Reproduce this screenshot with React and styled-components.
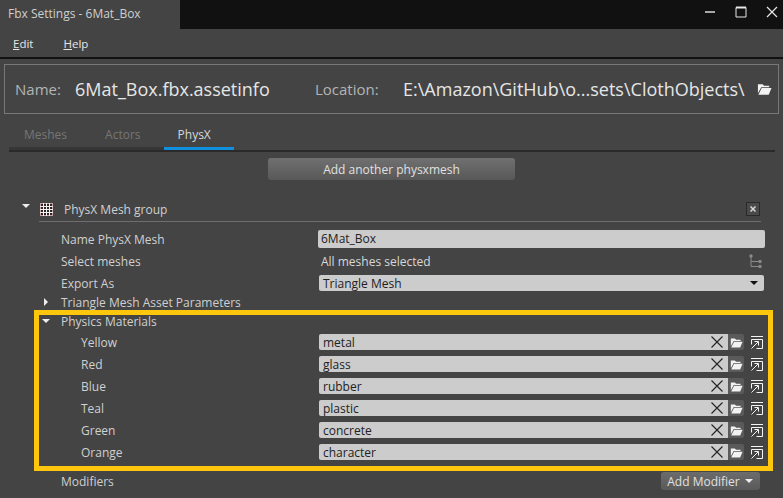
import styled, { createGlobalStyle } from "styled-components";

const materials = [
  ["Yellow", "metal"],
  ["Red", "glass"],
  ["Blue", "rubber"],
  ["Teal", "plastic"],
  ["Green", "concrete"],
  ["Orange", "character"],
];

const FolderIcon = ({ size = 12, color = "#f2f2f2" }) => (
  <svg width={size} height={size} viewBox="0 0 16 16">
    <path d="M1 3h5l1.500 1.500H13V6H4.500L1 12.500z" fill={color} />
    <path d="M5 7h10.500L12.500 14H1.500z" fill={color} />
  </svg>
);

const App = () => {
  return (
    <>
      <GlobalStyle />
      <Window>
        <TitleBar>
          <TitleTab>Fbx Settings - 6Mat_Box</TitleTab>
          <WindowButtons>
            <svg width="12" height="12" viewBox="0 0 12 12">
              <path d="M1 6h10" stroke="#e8e8e8" strokeWidth="1.400" />
            </svg>
            <svg width="12" height="12" viewBox="0 0 12 12">
              <path d="M1 1.500h10v9.500H1z" fill="none" stroke="#e8e8e8" strokeWidth="1" />
              <path d="M1 1.500h10" stroke="#e8e8e8" strokeWidth="2" />
            </svg>
            <svg width="12" height="12" viewBox="0 0 12 12">
              <path d="M1 1l10 10M11 1L1 11" stroke="#e8e8e8" strokeWidth="1.200" />
            </svg>
          </WindowButtons>
        </TitleBar>

        <MenuBar>
          <MenuItem>
            <u>E</u>dit
          </MenuItem>
          <MenuItem>
            <u>H</u>elp
          </MenuItem>
        </MenuBar>

        <NameBox>
          <NameLabel>Name:</NameLabel>
          <NameValue>6Mat_Box.fbx.assetinfo</NameValue>
          <LocationLabel>Location:</LocationLabel>
          <LocationValue>E:\Amazon\GitHub\o...sets\ClothObjects\</LocationValue>
          <FolderIcon size={16} />
        </NameBox>

        <TabBar>
          <Tab $left={15} $right={19}>Meshes</Tab>
          <Tab $left={19} $right={23}>Actors</Tab>
          <Tab $active $left={14} $right={23}>PhysX</Tab>
        </TabBar>

        <ButtonRow>
          <AddButton>Add another physxmesh</AddButton>
        </ButtonRow>

        <GroupHeader>
          <TriangleDown />
          <GroupBody>
            <GroupIcon>
              <svg width="13" height="13" viewBox="0 0 13 13">
                <rect x="0.500" y="0.500" width="12" height="12" fill="#2a2626" stroke="#c4a4a4" strokeWidth="1" />
                <path
                  d="M0 3.500h13M0 6.500h13M0 9.500h13M3.500 0v13M6.500 0v13M9.500 0v13"
                  stroke="#f6f0f0"
                  strokeWidth="1"
                />
              </svg>
            </GroupIcon>
            <GroupTitle>PhysX Mesh group</GroupTitle>
            <CloseBox>
              <svg width="6" height="6" viewBox="0 0 6 6">
                <path d="M0.500 0.500l5 5M5.500 0.500l-5 5" stroke="#d8d8d8" strokeWidth="1.500" />
              </svg>
            </CloseBox>
          </GroupBody>
        </GroupHeader>

        <Rows>
          <Row $height={22}>
            <RowLabel>Name PhysX Mesh</RowLabel>
            <TextInput>6Mat_Box</TextInput>
          </Row>
          <Row $height={22}>
            <RowLabel>Select meshes</RowLabel>
            <PlainValue>All meshes selected</PlainValue>
            <TreeIcon>
              <svg width="13" height="15" viewBox="0 0 13 15">
                <path d="M2 1.500V12.500H11M2 7.500H11" fill="none" stroke="#8a8a8a" strokeWidth="1" />
                <circle cx="2" cy="2" r="1.700" fill="#8a8a8a" />
                <circle cx="11" cy="7.500" r="1.700" fill="#8a8a8a" />
                <circle cx="11" cy="12.500" r="1.700" fill="#8a8a8a" />
              </svg>
            </TreeIcon>
          </Row>
          <Row $height={22}>
            <RowLabel>Export As</RowLabel>
            <SelectBox>
              Triangle Mesh
              <SelectArrow />
            </SelectBox>
          </Row>
          <Row $height={16}>
            <TriangleRight />
            <RowLabel>Triangle Mesh Asset Parameters</RowLabel>
          </Row>
        </Rows>

        <Highlight>
          <SubHeader>
            <TriangleDown />
            <span>Physics Materials</span>
          </SubHeader>
          {materials.map(([label, value]) => (
            <MaterialRow key={label}>
              <MaterialLabel>{label}</MaterialLabel>
              <MaterialInput>
                <span>{value}</span>
                <svg width="12" height="12" viewBox="0 0 12 12">
                  <path d="M0.500 0.500l11 11M11.500 0.500l-11 11" stroke="#222" strokeWidth="1.100" />
                </svg>
              </MaterialInput>
              <FolderButton>
                <FolderIcon size={13} />
              </FolderButton>
              <NavIcon>
                <svg width="12" height="13" viewBox="0 0 12 13">
                  <path d="M0 0.500h12" stroke="#f4f4f4" strokeWidth="1" />
                  <path d="M0.500 3.500h11v9H5.500M0.500 3.500v5" fill="none" stroke="#f4f4f4" strokeWidth="1" />
                  <path d="M0.500 12.500l6.500-6.500M3.500 5.500h4v4" fill="none" stroke="#f4f4f4" strokeWidth="1" />
                </svg>
              </NavIcon>
            </MaterialRow>
          ))}
        </Highlight>

        <ModifierRow>
          <RowLabel>Modifiers</RowLabel>
          <ModifierButton>
            Add Modifier
            <ButtonArrow />
          </ModifierButton>
        </ModifierRow>
      </Window>
    </>
  );
};

const GlobalStyle = createGlobalStyle`
  html, body {
    margin: 0;
    padding: 0;
    background: #444444;
    overflow: hidden;
  }
`;

const Window = styled.div`
  width: 783px;
  height: 498px;
  overflow: hidden;
  background-color: #444444;
  color: #d8d8d8;
  font-family: "Open Sans", sans-serif;
  font-size: 12px;
`;

const TitleBar = styled.div`
  height: 29px;
  display: flex;
  justify-content: space-between;
  background-color: #111111;
`;

const TitleTab = styled.div`
  width: 172px;
  padding-left: 8px;
  line-height: 28px;
  background-color: #444444;
  color: #cfcfcf;
  font-size: 12px;
`;

const WindowButtons = styled.div`
  display: flex;
  align-items: center;
  gap: 19px;
  padding: 0 5px 5px 0;
`;

const MenuBar = styled.div`
  height: 28px;
  display: flex;
  align-items: center;
  gap: 30px;
  padding-left: 13px;
  border-bottom: 2px solid #111111;
`;

const MenuItem = styled.span`
  color: #e6e6e6;
  font-size: 11.500px;
`;

const NameBox = styled.div`
  height: 48px;
  margin: 5px 4px 0;
  padding: 0 6px 0 10px;
  display: flex;
  align-items: center;
  border: 1px solid #787878;
  white-space: nowrap;
`;

const NameLabel = styled.span`
  flex: none;
  width: 60px;
  color: #b4b4b4;
  font-size: 15px;
`;

const NameValue = styled.span`
  flex: none;
  width: 240px;
  color: #e6e6e6;
  font-size: 18px;
`;

const LocationLabel = styled.span`
  flex: none;
  width: 88px;
  color: #b4b4b4;
  font-size: 15px;
`;

const LocationValue = styled.span`
  flex: none;
  width: 354px;
  color: #e6e6e6;
  font-size: 18px;
`;

const TabBar = styled.div`
  height: 36px;
  margin: 0 8px 0 9px;
  display: flex;
  align-items: flex-end;
  border-bottom: 2px solid #2a2a2a;
`;

const Tab = styled.div`
  height: 25px;
  padding: 0 ${(props) => props.$right}px 0 ${(props) => props.$left}px;
  box-sizing: border-box;
  line-height: 20px;
  font-size: 12px;
  color: ${(props) => (props.$active ? "#d8d8d8" : "#767676")};
  border-bottom: 3px solid ${(props) => (props.$active ? "#0f8fdc" : "#363636")};
`;

const ButtonRow = styled.div`
  display: flex;
  justify-content: center;
  padding: 6px 0 0;
`;

const AddButton = styled.div`
  width: 247px;
  height: 22px;
  border-radius: 3px;
  background: linear-gradient(#707070, #585858);
  color: #e0e0e0;
  font-size: 12px;
  line-height: 23px;
  text-align: center;
`;

const GroupHeader = styled.div`
  height: 42px;
  margin-right: 22px;
  padding-left: 22px;
  display: flex;
  align-items: flex-end;
`;

const TriangleDown = styled.span`
  width: 0;
  height: 0;
  flex: none;
  border-left: 4px solid transparent;
  border-right: 4px solid transparent;
  border-top: 4px solid #eeeeee;

  ${GroupHeader} > & {
    margin-bottom: 14px;
  }
`;

const TriangleRight = styled.span`
  width: 0;
  height: 0;
  flex: none;
  margin-left: 44px;
  border-top: 4px solid transparent;
  border-bottom: 4px solid transparent;
  border-left: 4px solid #eeeeee;
`;

const GroupBody = styled.div`
  flex: 1;
  height: 20px;
  margin-left: 9px;
  padding-left: 1px;
  display: flex;
  border-bottom: 1px solid #6e6e6e;
`;

const GroupIcon = styled.span`
  margin-top: 2px;
  height: 13px;
  line-height: 0;
`;

const GroupTitle = styled.span`
  flex: 1;
  margin-left: 11px;
  line-height: 18px;
  color: #d0d0d0;
`;

const CloseBox = styled.span`
  width: 12px;
  height: 12px;
  margin: 1px 1px 0 0;
  display: flex;
  align-items: center;
  justify-content: center;
  border: 1px solid #2a2a2a;
  background-color: #4a4a4a;
`;

const Rows = styled.div`
  padding-top: 6px;
`;

const Row = styled.div`
  height: ${(props) => props.$height}px;
  margin-right: 18px;
  display: flex;
  align-items: center;
`;

const RowLabel = styled.span`
  flex: none;
  width: 257px;
  padding-left: 61px;
  color: #d0d0d0;
  font-size: 12px;
  white-space: nowrap;

  ${TriangleRight} + & {
    padding-left: 13px;
  }
`;

const TextInput = styled.div`
  flex: 1;
  height: 18px;
  padding-left: 3px;
  border-radius: 2px;
  background-color: #cccccc;
  color: #222222;
  line-height: 17px;
`;

const PlainValue = styled.span`
  flex: 1;
  padding-left: 3px;
  color: #d8d8d8;
`;

const TreeIcon = styled.span`
  height: 15px;
  margin-right: 3px;
  line-height: 0;
`;

const SelectBox = styled.div`
  flex: 1;
  height: 16px;
  margin: 0 1px;
  padding: 0 6px 0 4px;
  display: flex;
  justify-content: space-between;
  align-items: center;
  border-radius: 2px;
  background-color: #cccccc;
  color: #222222;
`;

const SelectArrow = styled.span`
  width: 0;
  height: 0;
  border-left: 4px solid transparent;
  border-right: 4px solid transparent;
  border-top: 4px solid #111111;
`;

const Highlight = styled.div`
  width: 729px;
  height: 151px;
  margin-left: 34px;
  border: 5px solid #fec60d;
`;

const SubHeader = styled.div`
  height: 12px;
  padding: 0 0 4px 3px;
  display: flex;
  align-items: center;
  gap: 11px;
  color: #d0d0d0;
`;

const MaterialRow = styled.div`
  height: 22px;
  display: flex;
  align-items: center;
`;

const MaterialLabel = styled.span`
  width: 280px;
  padding-left: 42px;
  box-sizing: border-box;
  color: #d0d0d0;
`;

const MaterialInput = styled.div`
  width: 409px;
  height: 16px;
  padding: 0 5px 0 4px;
  box-sizing: border-box;
  display: flex;
  justify-content: space-between;
  align-items: center;
  border-radius: 2px 0 0 2px;
  background-color: #cccccc;
  color: #222222;
`;

const FolderButton = styled.div`
  width: 16px;
  height: 16px;
  display: flex;
  align-items: center;
  justify-content: center;
  border-radius: 0 2px 2px 0;
  background-color: #5a5a5a;
`;

const NavIcon = styled.div`
  margin-left: 7px;
  height: 13px;
  line-height: 0;
`;

const ModifierRow = styled.div`
  height: 20px;
  margin-right: 23px;
  display: flex;
  justify-content: space-between;
  align-items: center;
`;

const ModifierButton = styled.div`
  width: 99px;
  height: 18px;
  padding-right: 1px;
  box-sizing: border-box;
  display: flex;
  align-items: center;
  justify-content: center;
  gap: 5px;
  border-radius: 3px;
  background: linear-gradient(#6c6c6c, #5a5a5a);
  color: #e0e0e0;
`;

const ButtonArrow = styled.span`
  width: 0;
  height: 0;
  border-left: 4.500px solid transparent;
  border-right: 4.500px solid transparent;
  border-top: 4px solid #eeeeee;
`;

export default App;
